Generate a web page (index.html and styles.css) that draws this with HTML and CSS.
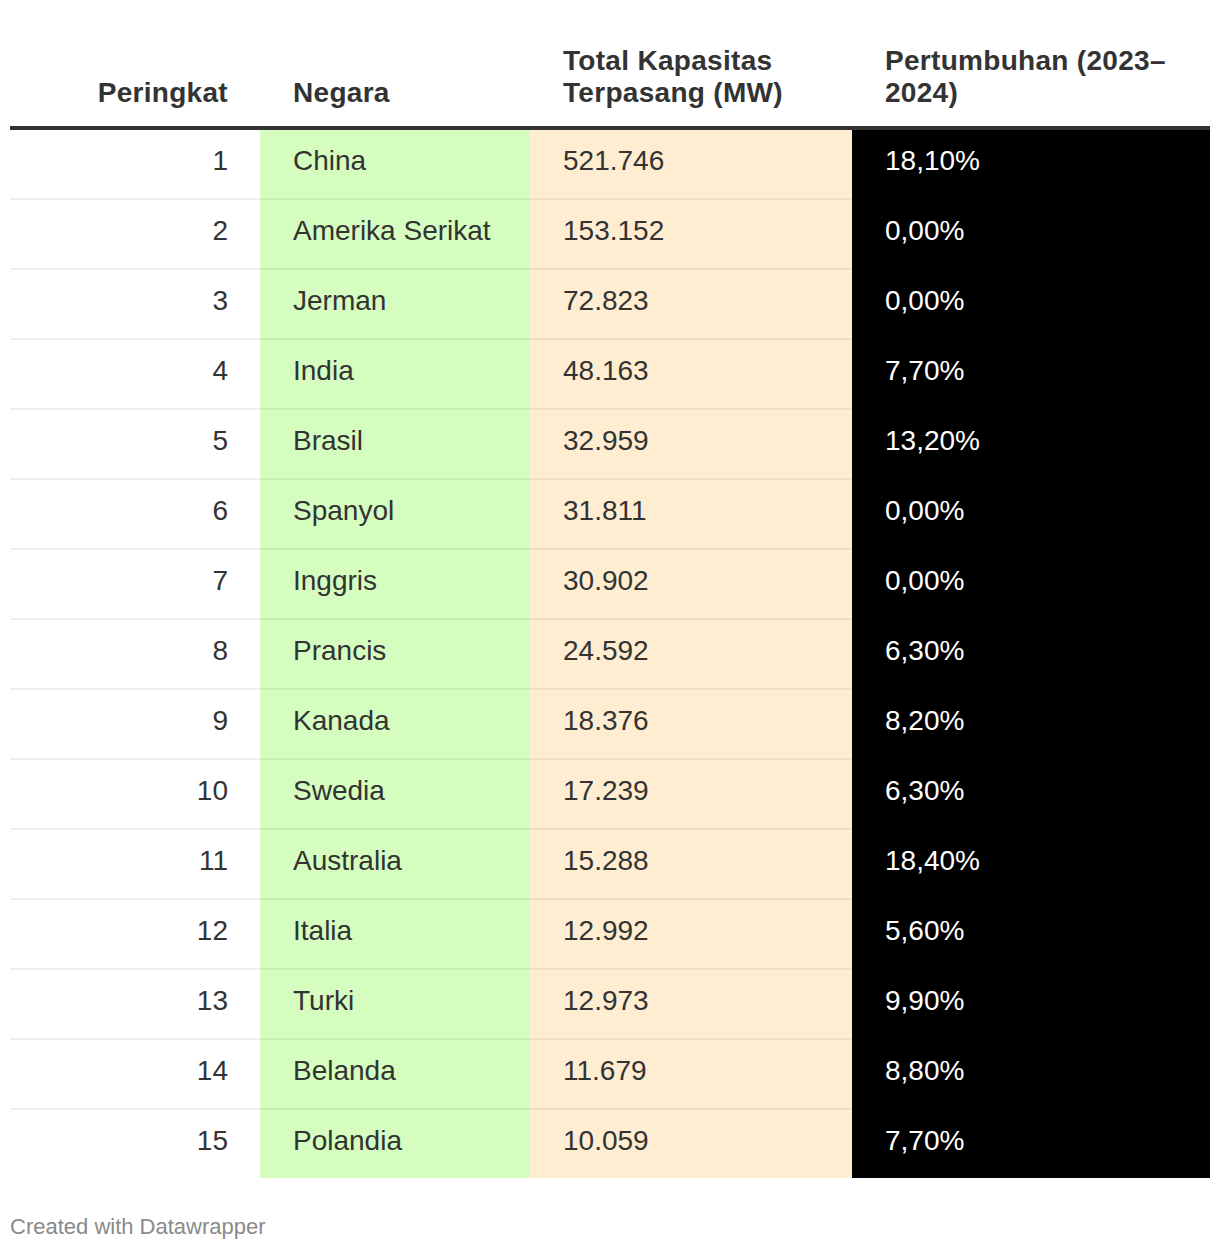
FILE: index.html
```html
<!DOCTYPE html>
<html lang="id">
<head>
<meta charset="utf-8">
<title>Kapasitas Terpasang</title>
<link rel="stylesheet" href="styles.css">
</head>
<body>
<div class="chart">
  <table class="dw-table">
    <colgroup>
      <col class="c-rank">
      <col class="c-country">
      <col class="c-cap">
      <col class="c-growth">
    </colgroup>
    <thead>
      <tr>
        <th class="num">Peringkat</th>
        <th>Negara</th>
        <th>Total Kapasitas Terpasang (MW)</th>
        <th>Pertumbuhan (2023–2024)</th>
      </tr>
    </thead>
    <tbody>
      <tr><td class="num">1</td><td class="green">China</td><td class="beige">521.746</td><td class="black">18,10%</td></tr>
      <tr><td class="num">2</td><td class="green">Amerika Serikat</td><td class="beige">153.152</td><td class="black">0,00%</td></tr>
      <tr><td class="num">3</td><td class="green">Jerman</td><td class="beige">72.823</td><td class="black">0,00%</td></tr>
      <tr><td class="num">4</td><td class="green">India</td><td class="beige">48.163</td><td class="black">7,70%</td></tr>
      <tr><td class="num">5</td><td class="green">Brasil</td><td class="beige">32.959</td><td class="black">13,20%</td></tr>
      <tr><td class="num">6</td><td class="green">Spanyol</td><td class="beige">31.811</td><td class="black">0,00%</td></tr>
      <tr><td class="num">7</td><td class="green">Inggris</td><td class="beige">30.902</td><td class="black">0,00%</td></tr>
      <tr><td class="num">8</td><td class="green">Prancis</td><td class="beige">24.592</td><td class="black">6,30%</td></tr>
      <tr><td class="num">9</td><td class="green">Kanada</td><td class="beige">18.376</td><td class="black">8,20%</td></tr>
      <tr><td class="num">10</td><td class="green">Swedia</td><td class="beige">17.239</td><td class="black">6,30%</td></tr>
      <tr><td class="num">11</td><td class="green">Australia</td><td class="beige">15.288</td><td class="black">18,40%</td></tr>
      <tr><td class="num">12</td><td class="green">Italia</td><td class="beige">12.992</td><td class="black">5,60%</td></tr>
      <tr><td class="num">13</td><td class="green">Turki</td><td class="beige">12.973</td><td class="black">9,90%</td></tr>
      <tr><td class="num">14</td><td class="green">Belanda</td><td class="beige">11.679</td><td class="black">8,80%</td></tr>
      <tr><td class="num">15</td><td class="green">Polandia</td><td class="beige">10.059</td><td class="black">7,70%</td></tr>
    </tbody>
  </table>
  <div class="footer">Created with Datawrapper</div>
</div>
</body>
</html>
```

FILE: styles.css
```css
html, body {
  margin: 0;
  padding: 0;
  background: #ffffff;
}

body {
  font-family: "Liberation Sans", Arial, Helvetica, sans-serif;
  color: #333333;
}

.chart {
  padding: 10px 10px 0 10px;
}

.dw-table {
  width: 1200px;
  table-layout: fixed;
  border-collapse: separate;
  border-spacing: 0;
  font-size: 28px;
}

.c-rank { width: 250px; }
.c-country { width: 270px; }
.c-cap { width: 322px; }
.c-growth { width: 358px; }

.dw-table th {
  font-weight: bold;
  text-align: left;
  vertical-align: bottom;
  line-height: 32px;
  padding: 35px 30px 17px 33px;
  border-bottom: 4px solid #333333;
  letter-spacing: 0.3px;
}

.dw-table td {
  text-align: left;
  vertical-align: top;
  line-height: 32px;
  padding: 15px 32px 21px 33px;
  border-bottom: 2px solid rgba(0, 0, 0, 0.06);
}

.dw-table tbody tr:last-child td {
  border-bottom: none;
}

.dw-table .num {
  text-align: right;
  padding-right: 32px;
  padding-left: 20px;
}

.green { background: #d5fdbf; }
.beige { background: #ffedd1; }
.black { background: #000000; color: #ffffff; }

.footer {
  margin-top: 35px;
  font-size: 22px;
  line-height: 28px;
  color: #8a8a8a;
}
```
